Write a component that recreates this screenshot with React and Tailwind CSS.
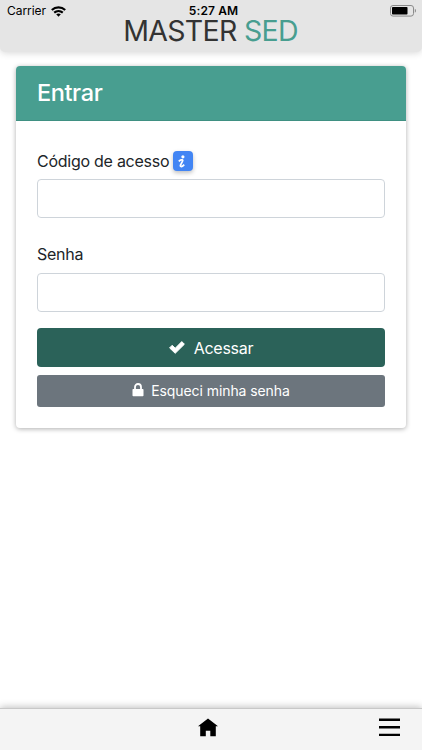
import { useState } from 'react';

function WifiIcon() {
  return (
    <svg width="15" height="11" viewBox="0 0 15 11" fill="none" stroke="#000" strokeWidth="2.2">
      <path d="M.8 4C4.6.5 10.4.5 14.2 4" />
      <path d="M3.2 6.6C5.7 4.5 9.3 4.5 11.8 6.6" />
      <path d="M5.2 8.3C6.5 7.1 8.5 7.1 9.8 8.3L7.5 10.7Z" fill="#000" stroke="none" />
    </svg>
  );
}

function BatteryIcon() {
  return (
    <svg width="27" height="12" viewBox="0 0 27 12">
      <rect x="0.5" y="0.5" width="23" height="10.6" rx="2.5" fill="none" stroke="#8b8b8b" />
      <rect x="2" y="2" width="15.5" height="7.6" rx="0.8" fill="#000" />
      <path d="M24.8 3.8C26.4 4.5 26.4 7.1 24.8 7.8Z" fill="#8b8b8b" />
    </svg>
  );
}

function InfoIcon() {
  return (
    <svg width="8" height="13" viewBox="0 0 8 13" fill="none" stroke="#fff" strokeWidth="1.7">
      <circle cx="4.9" cy="1.8" r="1.6" fill="#fff" stroke="none" />
      <path d="M.8 6.4C2 5 4.6 4.2 4.8 5.4C4.9 6.5 2 9.7 2.4 11C2.8 12.2 4.8 11.2 6.2 9.6" />
    </svg>
  );
}

function CheckIcon() {
  return (
    <svg width="16" height="14" viewBox="0 0 16 14" fill="#fff">
      <path d="M.6 6.9L3.2 4.3L6.2 7.3L12.8 .6L15.4 3.2L6.2 12.3Z" stroke="#fff" strokeWidth="1" strokeLinejoin="round" />
    </svg>
  );
}

function LockIcon() {
  return (
    <svg width="12" height="14" viewBox="0 0 12 14">
      <path d="M3 7V4A3 3 0 0 1 9 4V7" fill="none" stroke="#fff" strokeWidth="1.8" />
      <rect x=".5" y="6" width="11" height="7.3" rx=".8" fill="#fff" />
    </svg>
  );
}

function HomeIcon() {
  return (
    <svg width="20" height="19" viewBox="0 0 20 19">
      <path d="M10 .5L20 8.3H17.8V18.3H12.3V12.7H7.8V18.3H2.2V8.3H0Z" fill="#000" />
    </svg>
  );
}

function MenuIcon() {
  return (
    <svg width="21" height="19" viewBox="0 0 21 19" fill="none" stroke="#000" strokeWidth="2.4">
      <path d="M0 1.7H21M0 9.3H21M0 16.9H21" />
    </svg>
  );
}

const inputClass =
  'block h-[39px] w-full rounded-[4px] border border-[#ced4da] bg-white px-3 text-base outline-none';

export default function App() {
  const [codigo, setCodigo] = useState('');
  const [senha, setSenha] = useState('');

  return (
    <div className="flex h-[750px] w-full flex-col overflow-hidden bg-white font-['Inter',sans-serif] text-[#212529]">
      <header className="h-[52px] shrink-0 rounded-b-[5px] bg-[#e5e5e5] shadow-[0_1px_7px_rgba(0,0,0,0.16)]">
        <div className="grid h-[22px] grid-cols-3 items-center pr-[5px] pl-[7px] text-[12px] leading-[22px] text-black">
          <div className="flex items-center gap-[5px]">
            <span className="tracking-[-0.05px]">Carrier</span>
            <WifiIcon />
          </div>
          <span className="pl-[3px] text-center font-semibold tracking-[0.1px]">5:27 AM</span>
          <div className="flex justify-end">
            <BatteryIcon />
          </div>
        </div>
        <h1 className="pr-px text-center text-[28.5px] leading-[18px] font-[370] tracking-[-0.7px] whitespace-nowrap text-[#333]">
          MASTER <span className="text-[#489e90]">SED</span>
        </h1>
      </header>

      <main className="flex-1 px-[16px] pt-[14px]">
        <section className="h-[362px] overflow-hidden rounded-[4px] bg-white shadow-[0_1px_5px_rgba(0,0,0,0.32)]">
          <h2 className="h-[55px] border-b border-[#3f9082] bg-[#489e90] pl-[21px] text-[23.5px] leading-[53px] font-[480] tracking-[-0.4px] text-white">
            Entrar
          </h2>
          <form className="px-[21px] pt-[28px]" onSubmit={(e) => e.preventDefault()}>
            <label className="flex h-[24px] items-center gap-[4px] text-[16px] tracking-[-0.26px]" htmlFor="codigo">
              <span>Código de acesso</span>
              <span className="flex h-[20px] w-[20px] items-center justify-center rounded-[4px] bg-[#4285f4] pr-[2px] shadow-[0_2px_4px_rgba(0,0,0,0.25)]">
                <InfoIcon />
              </span>
            </label>
            <input id="codigo" className={`mt-[6px] ${inputClass}`} value={codigo} onChange={(e) => setCodigo(e.target.value)} />
            <label className="mt-[24px] block h-[24px] text-[16px] leading-[24px] tracking-[-0.26px]" htmlFor="senha">
              Senha
            </label>
            <input id="senha" type="password" className={`mt-[7px] ${inputClass}`} value={senha} onChange={(e) => setSenha(e.target.value)} />
            <button type="submit" className="mt-[16px] flex h-[39px] w-full items-center justify-center gap-[9px] rounded-[4px] bg-[#2b6259] text-[16px] tracking-[-0.26px] text-white">
              <CheckIcon />
              <span>Acessar</span>
            </button>
            <button type="button" className="mt-[8px] flex h-[32px] w-full items-center justify-center gap-[7px] rounded-[3px] bg-[#6c757d] pb-[2px] text-[14px] tracking-[-0.08px] text-white">
              <LockIcon />
              <span>Esqueci minha senha</span>
            </button>
          </form>
        </section>
      </main>

      <footer className="grid h-[42px] shrink-0 grid-cols-[1fr_20px_1fr] items-start border-t border-[#c8c8c8] bg-[#f4f4f4] pt-[9px] pr-[22px] pl-[16px] shadow-[0_-1px_7px_rgba(0,0,0,0.25)]">
        <span />
        <HomeIcon />
        <div className="flex justify-end">
          <MenuIcon />
        </div>
      </footer>
    </div>
  );
}
